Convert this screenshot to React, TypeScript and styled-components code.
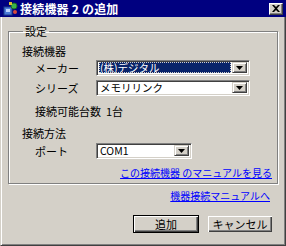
import styled, { createGlobalStyle } from 'styled-components';

const GlobalStyle = createGlobalStyle`
  html, body {
    margin: 0;
    padding: 0;
    background: #d4d0c8;
  }
  body {
    font-family: "Noto Sans CJK JP", "Liberation Sans", sans-serif;
    font-size: 11px;
    color: #000;
  }
`;

function DeviceIcon() {
  return (
    <svg width="15" height="14" viewBox="0 0 15 14">
      <rect x="1" y="5" width="8" height="8" fill="#4a7ad8" stroke="#1c3c8c" />
      <rect x="3" y="7" width="4" height="3" fill="#bcd4ff" />
      <circle cx="11" cy="4" r="3" fill="#3bb34a" stroke="#1a6b22" />
      <rect x="6" y="0" width="3" height="3" fill="#e0c030" />
      <circle cx="12" cy="10" r="2" fill="#d84a3a" />
    </svg>
  );
}

function Combo({
  value,
  width,
  selected,
}: {
  value: string,
  width: number,
  selected?: boolean,
}) {
  return (
    <ComboBox $width={width}>
      <ComboField $selected={selected}>{value}</ComboField>
      <ArrowButton>
        <svg width="7" height="4" viewBox="0 0 7 4">
          <path d="M0 0h7L3.5 4z" fill="#000" />
        </svg>
      </ArrowButton>
    </ComboBox>
  );
}

export default function App() {
  return (
    <>
      <GlobalStyle />
      <Window>
        <TitleBar>
          <DeviceIcon />
          <Title>接続機器 2 の追加</Title>
          <CloseButton>
            <svg width="8" height="7" viewBox="0 0 8 7">
              <path d="M0 0h2l2 2 2-2h2L5 3.5 8 7H6L4 5 2 7H0l3-3.5z" fill="#000" />
            </svg>
          </CloseButton>
        </TitleBar>
        <Body>
          <GroupBox>
            <Legend>設定</Legend>
            <SectionLabel>接続機器</SectionLabel>
            <Row>
              <FieldLabel>メーカー</FieldLabel>
              <Combo value="(株)デジタル" width={154} selected />
            </Row>
            <Row>
              <FieldLabel>シリーズ</FieldLabel>
              <Combo value="メモリリンク" width={154} />
            </Row>
            <InfoRow>
              <span>接続可能台数</span>
              <span>1台</span>
            </InfoRow>
            <SectionLabel $gap>接続方法</SectionLabel>
            <Row>
              <FieldLabel>ポート</FieldLabel>
              <Combo value="COM1" width={96} />
            </Row>
            <LinkRow>
              <Link>この接続機器 のマニュアルを見る</Link>
            </LinkRow>
          </GroupBox>
          <LinkRow $outside>
            <Link>機器接続マニュアルへ</Link>
          </LinkRow>
          <ButtonRow>
            <PushButton $default>追加</PushButton>
            <PushButton>キャンセル</PushButton>
          </ButtonRow>
        </Body>
      </Window>
    </>
  );
}

const Window = styled.div`
  box-sizing: border-box;
  width: 286px;
  height: 246px;
  display: flex;
  flex-direction: column;
`;

const TitleBar = styled.div`
  height: 17px;
  display: flex;
  align-items: center;
  gap: 2px;
  padding: 0 3px 0 3px;
  background: #000080;
  color: #fff;
`;

const Title = styled.div`
  flex: 1;
  font-weight: bold;
  font-size: 12px;
  letter-spacing: 0.2px;
`;

const CloseButton = styled.div`
  box-sizing: border-box;
  width: 14px;
  height: 12px;
  display: flex;
  align-items: center;
  justify-content: center;
  background: #d4d0c8;
  border-top: 1px solid #fff;
  border-left: 1px solid #fff;
  border-right: 1px solid #404040;
  border-bottom: 1px solid #404040;
  box-shadow: inset -1px -1px 0 #808080;
`;

const Body = styled.div`
  flex: 1;
  display: flex;
  flex-direction: column;
  padding: 8px 7px 0 7px;
  border-left: 1px solid #d4d0c8;
  border-right: 1px solid #404040;
  border-bottom: 1px solid #404040;
  box-shadow: inset 1px 0 0 #fff, inset -1px -1px 0 #808080;
`;

const GroupBox = styled.fieldset`
  margin: 0;
  padding: 7px 5px 4px 13px;
  border: 1px solid #808080;
  box-shadow: 1px 1px 0 #fff, inset 1px 1px 0 #fff;
  display: flex;
  flex-direction: column;
`;

const Legend = styled.legend`
  padding: 0 2px;
  margin-left: 1px;
  line-height: 12px;
`;

const SectionLabel = styled.div<{ $gap?: boolean }>`
  line-height: 14px;
  margin-top: ${(p) => (p.$gap ? '5px' : '0')};
  margin-bottom: ${(p) => (p.$gap ? '1px' : '0')};
`;

const Row = styled.div`
  display: flex;
  align-items: center;
  height: 20px;
  padding-left: 13px;
`;

const FieldLabel = styled.div`
  width: 61px;
`;

const InfoRow = styled.div`
  display: flex;
  gap: 5px;
  height: 20px;
  margin-top: 3px;
  align-items: center;
  padding-left: 13px;
`;

const ComboBox = styled.div<{ $width: number }>`
  box-sizing: border-box;
  width: ${(p) => p.$width}px;
  height: 16px;
  display: flex;
  background: #fff;
  border-top: 1px solid #808080;
  border-left: 1px solid #808080;
  border-right: 1px solid #fff;
  border-bottom: 1px solid #fff;
  box-shadow: inset 1px 1px 0 #404040, inset -1px -1px 0 #d4d0c8;
  padding: 1px 2px 2px 2px;
`;

const ComboField = styled.div<{ $selected?: boolean }>`
  flex: 1;
  margin-right: 1px;
  padding-left: 1px;
  background: ${(p) => (p.$selected ? '#0a246a' : 'transparent')};
  color: ${(p) => (p.$selected ? '#fff' : '#000')};
  outline: ${(p) => (p.$selected ? '1px dotted #d4d0c8' : 'none')};
  outline-offset: -1px;
  font-size: 10.5px;
  line-height: 12px;
  white-space: nowrap;
`;

const ArrowButton = styled.div`
  box-sizing: border-box;
  width: 15px;
  display: flex;
  align-items: center;
  justify-content: center;
  background: #d4d0c8;
  border-top: 1px solid #d4d0c8;
  border-left: 1px solid #d4d0c8;
  border-right: 1px solid #404040;
  border-bottom: 1px solid #404040;
  box-shadow: inset 1px 1px 0 #fff, inset -1px -1px 0 #808080;
`;

const LinkRow = styled.div<{ $outside?: boolean }>`
  display: flex;
  justify-content: flex-end;
  margin-top: ${(p) => (p.$outside ? '5px' : '5px')};
  padding-right: ${(p) => (p.$outside ? '8px' : '0')};
`;

const Link = styled.span`
  color: #0000ff;
  text-decoration: underline;
  font-size: 10px;
  line-height: 13px;
`;

const ButtonRow = styled.div`
  display: flex;
  justify-content: flex-end;
  gap: 8px;
  margin-top: 13px;
  padding-right: 5px;
`;

const PushButton = styled.div<{ $default?: boolean }>`
  box-sizing: border-box;
  width: 66px;
  height: 18px;
  display: flex;
  align-items: center;
  justify-content: center;
  background: #d4d0c8;
  border: 1px solid ${(p) => (p.$default ? '#000' : '#d4d0c8')};
  box-shadow: inset 1px 1px 0 #fff, inset -1px -1px 0 #404040, inset -2px -2px 0 #808080;
`;
